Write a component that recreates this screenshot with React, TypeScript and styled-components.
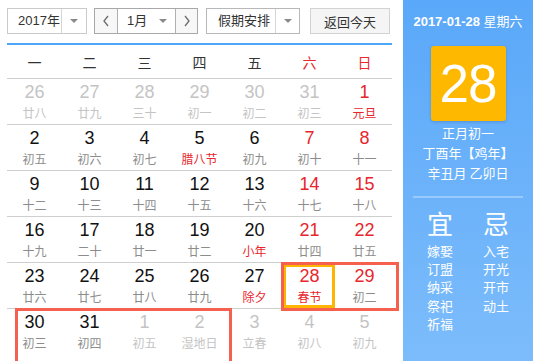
import styled, { createGlobalStyle } from 'styled-components';

type Day = {
  n: number;
  lunar: string;
  other?: boolean;
  red?: boolean;
  fest?: boolean;
  today?: boolean;
};

const WEEK = ['一', '二', '三', '四', '五', '六', '日'];

const d = (n: number, lunar: string, opts: Partial<Day> = {}): Day => ({ n, lunar, ...opts });
const o = (n: number, lunar: string): Day => ({ n, lunar, other: true });

const ROWS: Day[][] = [
  [o(26, '廿八'), o(27, '廿九'), o(28, '三十'), o(29, '初一'), o(30, '初二'), o(31, '初三'), d(1, '元旦', { red: true, fest: true })],
  [d(2, '初五'), d(3, '初六'), d(4, '初七'), d(5, '腊八节', { fest: true }), d(6, '初九'), d(7, '初十', { red: true }), d(8, '十一', { red: true })],
  [d(9, '十二'), d(10, '十三'), d(11, '十四'), d(12, '十五'), d(13, '十六'), d(14, '十七', { red: true }), d(15, '十八', { red: true })],
  [d(16, '十九'), d(17, '二十'), d(18, '廿一'), d(19, '廿二'), d(20, '小年', { fest: true }), d(21, '廿四', { red: true }), d(22, '廿五', { red: true })],
  [d(23, '廿六'), d(24, '廿七'), d(25, '廿八'), d(26, '廿九'), d(27, '除夕', { fest: true }), d(28, '春节', { red: true, fest: true, today: true }), d(29, '初二', { red: true })],
  [d(30, '初三'), d(31, '初四'), o(1, '初五'), o(2, '湿地日'), o(3, '立春'), o(4, '初八'), o(5, '初九')],
];

const YI = ['嫁娶', '订盟', '纳采', '祭祀', '祈福'];
const JI = ['入宅', '开光', '开市', '动土'];

const GlobalStyle = createGlobalStyle`
  html, body { margin: 0; padding: 0; background: #fff; }
  body {
    font-family: "Liberation Sans", "Noto Sans CJK SC", sans-serif;
    color: #333;
  }
`;

const Frame = styled.div`
  position: relative;
  display: flex;
  width: 538px;
  height: 361px;
  overflow: hidden;
`;

const Main = styled.div`
  width: 403px;
  box-sizing: border-box;
  padding: 8px 11px 0 7px;
`;

const Toolbar = styled.div`
  display: flex;
  height: 26px;
  margin-bottom: 9px;
  font-size: 13px;
`;

const Box = styled.div<{ $w: number; $border: string; $gap: number }>`
  display: flex;
  width: ${(p) => p.$w}px;
  height: 26px;
  box-sizing: border-box;
  border: 1px solid ${(p) => p.$border};
  margin-right: ${(p) => p.$gap}px;
  background: #fff;
`;

const Label = styled.div<{ $pl: number; $pr?: number }>`
  flex: 1;
  min-width: 0;
  display: flex;
  align-items: center;
  justify-content: space-between;
  padding: 0 ${(p) => p.$pr ?? 0}px 0 ${(p) => p.$pl}px;
  line-height: 24px;
  white-space: nowrap;
  color: #333;
`;

const ArrowCell = styled.div<{ $w: number }>`
  width: ${(p) => p.$w}px;
  flex: none;
  display: flex;
  align-items: center;
  justify-content: center;
  border-left: 1px solid #d6d6d6;
`;

const Caret = styled.span`
  width: 0;
  height: 0;
  border-left: 4px solid transparent;
  border-right: 4px solid transparent;
  border-top: 4px solid #8a8a8a;
`;

const NavBtn = styled.div<{ $w: number; $side: 'left' | 'right' }>`
  width: ${(p) => p.$w}px;
  flex: none;
  display: flex;
  align-items: center;
  justify-content: center;
  background: #f7f7f7;
  ${(p) => (p.$side === 'left' ? 'border-right' : 'border-left')}: 1px solid #b0b0b0;
`;

const TodayBtn = styled.div`
  width: 80px;
  height: 26px;
  box-sizing: border-box;
  border: 1px solid #d2d2d2;
  background: #f5f5f5;
  display: flex;
  align-items: center;
  justify-content: center;
  white-space: nowrap;
  color: #333;
`;

const WeekHead = styled.div`
  display: grid;
  grid-template-columns: repeat(7, 55px);
  height: 36px;
  box-sizing: border-box;
  border-top: 2px solid #4ea6f6;
  border-bottom: 1px solid #cfcfcf;
  align-items: center;
  font-family: "Noto Sans CJK SC", sans-serif;
  font-size: 14px;
`;

const WeekName = styled.div<{ $red: boolean }>`
  text-align: center;
  color: ${(p) => (p.$red ? '#e8262d' : '#333')};
`;

const DayRow = styled.div`
  display: grid;
  grid-template-columns: repeat(7, 55px);
  height: 46px;
  box-sizing: border-box;
  border-bottom: 1px solid #cfcfcf;

  &:last-child {
    border-bottom: none;
  }
`;

const Cell = styled.div<{ $today: boolean }>`
  position: relative;
  display: flex;
  flex-direction: column;
  align-items: center;
  padding-top: 3px;

  ${(p) =>
    p.$today &&
    `
    &::after {
      content: '';
      position: absolute;
      left: 1px;
      right: 2px;
      top: 1px;
      bottom: 0;
      border: 3px solid #ffb400;
    }
  `}
`;

const Num = styled.div<{ $tone: string }>`
  font-size: 18px;
  line-height: 21px;
  color: ${(p) => p.$tone};
`;

const Lunar = styled.div<{ $tone: string }>`
  margin-top: 2px;
  font-family: "Noto Sans CJK SC", sans-serif;
  font-size: 12px;
  line-height: 16px;
  white-space: nowrap;
  color: ${(p) => p.$tone};
`;

const Mark = styled.div<{ $l: number; $t: number; $w: number; $h: number }>`
  position: absolute;
  left: ${(p) => p.$l}px;
  top: ${(p) => p.$t}px;
  width: ${(p) => p.$w}px;
  height: ${(p) => p.$h}px;
  box-sizing: border-box;
  border: 3px solid #f6604f;
  pointer-events: none;
`;

const Side = styled.aside`
  width: 130px;
  height: 361px;
  display: flex;
  flex-direction: column;
  align-items: center;
  padding-top: 12px;
  box-sizing: border-box;
  background: linear-gradient(180deg, #5aa8f9 0%, #7cbcfb 100%);
  color: #fff;
  font-family: "Liberation Sans", "Noto Sans CJK SC", sans-serif;
`;

const DateLine = styled.div`
  font-size: 13px;
  font-weight: bold;
  line-height: 20px;
  white-space: nowrap;

  span {
    font-weight: normal;
  }
`;

const DayBox = styled.div`
  width: 75px;
  height: 75px;
  margin-top: 14px;
  border-radius: 3px;
  background: #ffb800;
  box-shadow: 0 1px 3px rgba(30, 60, 120, 0.25);
  display: flex;
  align-items: center;
  justify-content: center;
  font-size: 53px;
  line-height: 1;
  letter-spacing: -1px;
`;

const LunarInfo = styled.div`
  margin-top: 2px;
  font-family: "Noto Sans CJK SC", sans-serif;
  font-size: 13px;
  line-height: 20px;
  text-align: center;
  white-space: nowrap;
`;

const Rule = styled.div`
  width: 110px;
  height: 2px;
  margin-top: 13px;
  background: rgba(255, 255, 255, 0.3);
`;

const Advice = styled.div`
  display: flex;
  margin-top: 10px;
  font-family: "Noto Sans CJK SC", sans-serif;
`;

const AdviceCol = styled.div`
  width: 56px;
  text-align: center;
`;

const AdviceHead = styled.div`
  font-size: 26px;
  line-height: 30px;
`;

const AdviceList = styled.div`
  margin-top: 4px;
  font-size: 13px;
  line-height: 18.2px;
`;

function Chevron({ dir }: { dir: 'left' | 'right' }) {
  const pts = dir === 'left' ? '6,1 2,6 6,11' : '2,1 6,6 2,11';
  return (
    <svg width="8" height="12" viewBox="0 0 8 12" aria-hidden="true">
      <polyline points={pts} fill="none" stroke="#6c6c6c" strokeWidth="1.3" />
    </svg>
  );
}

function numTone(day: Day) {
  if (day.other) return '#c4c4c4';
  if (day.red) return '#e8262d';
  return '#111';
}

function lunarTone(day: Day) {
  if (day.other) return '#c4c4c4';
  if (day.fest) return '#e8262d';
  return '#8c8c8c';
}

export default function App() {
  return (
    <>
      <GlobalStyle />
      <Frame>
        <Main>
          <Toolbar>
            <Box $w={80} $border="#cacaca" $gap={7}>
              <Label $pl={10}>2017年</Label>
              <ArrowCell $w={24}>
                <Caret />
              </ArrowCell>
            </Box>
            <Box $w={104} $border="#a8a8a8" $gap={8}>
              <NavBtn $w={22} $side="left">
                <Chevron dir="left" />
              </NavBtn>
              <Label $pl={9} $pr={8}>
                1月
                <Caret />
              </Label>
              <NavBtn $w={21} $side="right">
                <Chevron dir="right" />
              </NavBtn>
            </Box>
            <Box $w={94} $border="#b8b8b8" $gap={10}>
              <Label $pl={11}>假期安排</Label>
              <ArrowCell $w={23}>
                <Caret />
              </ArrowCell>
            </Box>
            <TodayBtn>返回今天</TodayBtn>
          </Toolbar>

          <WeekHead>
            {WEEK.map((w, i) => (
              <WeekName key={w} $red={i >= 5}>
                {w}
              </WeekName>
            ))}
          </WeekHead>

          {ROWS.map((row, ri) => (
            <DayRow key={ri}>
              {row.map((day, ci) => (
                <Cell key={ci} $today={!!day.today}>
                  <Num $tone={numTone(day)}>{day.n}</Num>
                  <Lunar $tone={lunarTone(day)}>{day.lunar}</Lunar>
                </Cell>
              ))}
            </DayRow>
          ))}
        </Main>

        <Side>
          <DateLine>
            2017-01-28 <span>星期六</span>
          </DateLine>
          <DayBox>28</DayBox>
          <LunarInfo>
            正月初一
            <br />
            丁酉年【鸡年】
            <br />
            辛丑月 乙卯日
          </LunarInfo>
          <Rule />
          <Advice>
            <AdviceCol>
              <AdviceHead>宜</AdviceHead>
              <AdviceList>
                {YI.map((t) => (
                  <div key={t}>{t}</div>
                ))}
              </AdviceList>
            </AdviceCol>
            <AdviceCol>
              <AdviceHead>忌</AdviceHead>
              <AdviceList>
                {JI.map((t) => (
                  <div key={t}>{t}</div>
                ))}
              </AdviceList>
            </AdviceCol>
          </Advice>
        </Side>

        <Mark $l={281} $t={262} $w={118} $h={49} />
        <Mark $l={15} $t={308} $w={217} $h={70} />
      </Frame>
    </>
  );
}
